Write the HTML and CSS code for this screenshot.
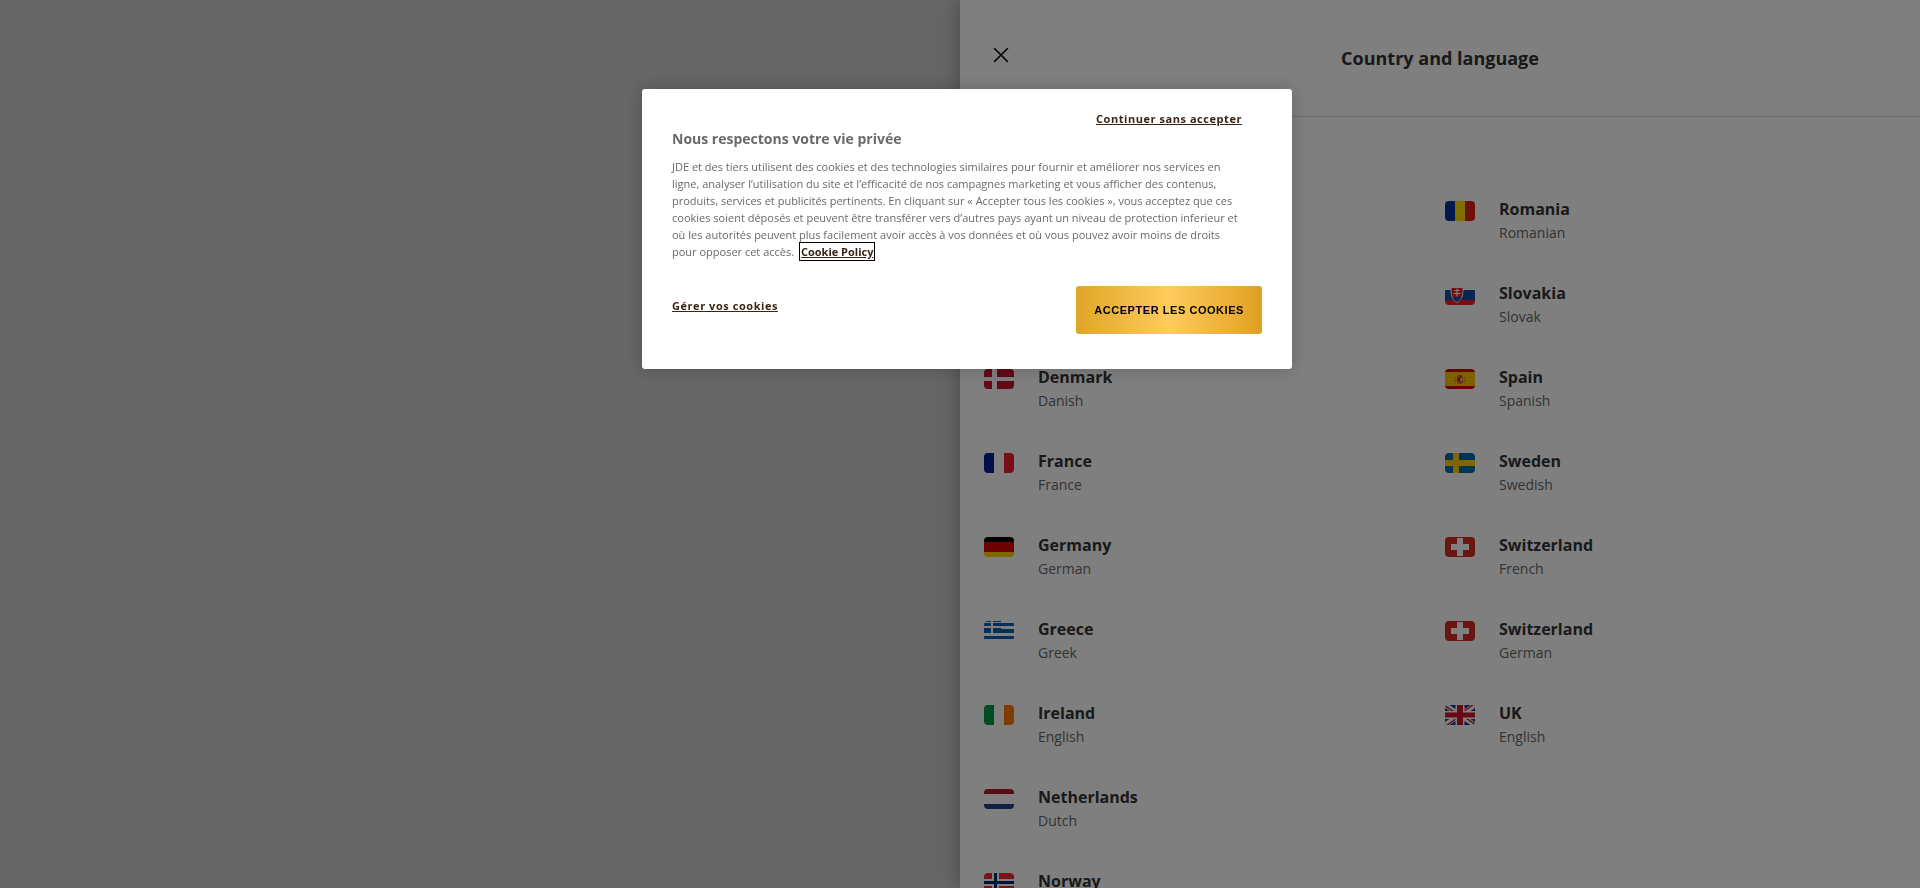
FILE: index.html
```html
<!DOCTYPE html>
<html lang="fr">
<head>
    <meta charset="UTF-8">
    <meta name="viewport" content="width=device-width, initial-scale=1.0">
    <title>Country and language</title>
    <link rel="stylesheet" href="styles.css">
</head>
<body>
    <aside class="panel">
        <header class="panel-header">
            <button type="button" class="close-btn" aria-label="Close">
                <svg width="16" height="16" viewBox="0 0 16 16"><path d="M1.500 1.500L14.500 14.500M14.500 1.500L1.500 14.500" stroke="#000" stroke-width="1.600" stroke-linecap="round"/></svg>
            </button>
            <h1 class="panel-title">Country and language</h1>
        </header>
        <nav class="countries">
            <div class="country-list from-third">
                <a href="#" class="country">
                    <svg class="flag" viewBox="0 0 30 20"><path fill="#c8102e" d="M0 0h30v20H0z"/><path fill="#fff" d="M8 0h5v20H8zM0 8h30v4H0z"/></svg>
                    <span class="country-text"><strong>Denmark</strong><span>Danish</span></span>
                </a>
                <a href="#" class="country">
                    <svg class="flag" viewBox="0 0 30 20"><path fill="#002395" d="M0 0h10v20H0z"/><path fill="#fff" d="M10 0h10v20H10z"/><path fill="#ed1b2e" d="M20 0h10v20H20z"/></svg>
                    <span class="country-text"><strong>France</strong><span>France</span></span>
                </a>
                <a href="#" class="country">
                    <svg class="flag" viewBox="0 0 30 20"><path d="M0 0h30v5H0z"/><path fill="#d00" d="M0 5h30v10H0z"/><path fill="#ffce00" d="M0 15h30v5H0z"/></svg>
                    <span class="country-text"><strong>Germany</strong><span>German</span></span>
                </a>
                <a href="#" class="country">
                    <svg class="flag" viewBox="0 0 30 20"><path fill="#fff" d="M0 0h30v20H0z"/><path fill="#0d5eaf" d="M0 0h7v1H0zM9 0h8v1H9zM0 2h7v10H0zM9 2h8v10H9zM17 2h13v3H17zM17 8h13v4H17zM0 15h30v3H0z"/><path fill="#fff" d="M0 5h17v2H0z"/></svg>
                    <span class="country-text"><strong>Greece</strong><span>Greek</span></span>
                </a>
                <a href="#" class="country">
                    <svg class="flag" viewBox="0 0 30 20"><path fill="#009a49" d="M0 0h10v20H0z"/><path fill="#fff" d="M10 0h10v20H10z"/><path fill="#ff7900" d="M20 0h10v20H20z"/></svg>
                    <span class="country-text"><strong>Ireland</strong><span>English</span></span>
                </a>
                <a href="#" class="country">
                    <svg class="flag" viewBox="0 0 30 20"><path fill="#ae1c28" d="M0 0h30v5H0z"/><path fill="#fff" d="M0 5h30v10H0z"/><path fill="#21468b" d="M0 15h30v5H0z"/></svg>
                    <span class="country-text"><strong>Netherlands</strong><span>Dutch</span></span>
                </a>
                <a href="#" class="country">
                    <svg class="flag" viewBox="0 0 30 20"><path fill="#ef2b2d" d="M0 0h30v20H0z"/><path fill="#fff" d="M8 0h7v20H8zM0 6h30v7H0z"/><path fill="#002868" d="M10 0h3v20h-3zM0 8h30v3H0z"/></svg>
                    <span class="country-text"><strong>Norway</strong></span>
                </a>
            </div>
            <div class="country-list">
                <a href="#" class="country">
                    <svg class="flag" viewBox="0 0 30 20"><path fill="#00319c" d="M0 0h10v20H0z"/><path fill="#ffde00" d="M10 0h10v20H10z"/><path fill="#de2110" d="M20 0h10v20H20z"/></svg>
                    <span class="country-text"><strong>Romania</strong><span>Romanian</span></span>
                </a>
                <a href="#" class="country">
                    <svg class="flag" viewBox="0 0 30 20"><path fill="#fff" d="M0 0h30v20H0z"/><path fill="#0b4ea2" d="M0 5h30v10H0z"/><path fill="#ee1c25" d="M0 15h30v5H0z"/><path fill="#ee1c25" stroke="#fff" d="M6 2.500h12c.3 7.500-.8 12.300-6 15-5.200-2.700-6.300-7.500-6-15z"/><path fill="#0b4ea2" d="M8 13c2-2 6-2 8 0-1 2-2 3-4 4-2-1-3-2-4-4z"/><path fill="none" stroke="#fff" stroke-width="1.200" d="M12 3.500v8M9.500 5.500h5M8.500 8.500h7"/></svg>
                    <span class="country-text"><strong>Slovakia</strong><span>Slovak</span></span>
                </a>
                <a href="#" class="country">
                    <svg class="flag" viewBox="0 0 30 20"><path fill="#c8000d" d="M0 0h30v20H0z"/><path fill="#ffc400" d="M0 3h30v14H0z"/><path fill="#c8654a" d="M12 7l2-1 3 1 1 2v5l-3 1-3-1z"/><path fill="#a91e22" d="M12.500 9H15v3h-2.500zM15 6h1.500v3H15z"/><path fill="#ead0b4" d="M15.500 9H17v3h-1.500z"/><path fill="none" stroke="#a8752a" stroke-dasharray="2 1" d="M10 8v6.500M20 8v6.500"/></svg>
                    <span class="country-text"><strong>Spain</strong><span>Spanish</span></span>
                </a>
                <a href="#" class="country">
                    <svg class="flag" viewBox="0 0 30 20"><path fill="#006aa7" d="M0 0h30v20H0z"/><path fill="#fecc00" d="M8 0h6v20H8zM0 7h30v6H0z"/></svg>
                    <span class="country-text"><strong>Sweden</strong><span>Swedish</span></span>
                </a>
                <a href="#" class="country">
                    <svg class="flag" viewBox="0 0 30 20"><path fill="#d52b1e" d="M0 0h30v20H0z"/><path fill="#fff" d="M12 1h6v6h6v6h-6v6h-6v-6H6V7h6z"/></svg>
                    <span class="country-text"><strong>Switzerland</strong><span>French</span></span>
                </a>
                <a href="#" class="country">
                    <svg class="flag" viewBox="0 0 30 20"><path fill="#d52b1e" d="M0 0h30v20H0z"/><path fill="#fff" d="M12 1h6v6h6v6h-6v6h-6v-6H6V7h6z"/></svg>
                    <span class="country-text"><strong>Switzerland</strong><span>German</span></span>
                </a>
                <a href="#" class="country">
                    <svg class="flag" viewBox="0 0 30 20"><path fill="#003f87" d="M0 0h30v20H0z"/><path stroke="#fff" stroke-width="5" d="M0 0l30 20M30 0L0 20"/><path stroke="#cf142b" stroke-width="1.500" d="M0 0.800l12 8M30 19.200l-12-8M28 0L17 7.500M2 20l11-7.500"/><path fill="#fff" d="M10.500 0h9v20h-9zM0 6h30v8H0z"/><path fill="#cf142b" d="M12 0h6v20h-6zM0 7.500h30v5H0z"/></svg>
                    <span class="country-text"><strong>UK</strong><span>English</span></span>
                </a>
            </div>
        </nav>
    </aside>

    <div class="overlay">
        <div class="cookie-box" role="dialog" aria-labelledby="cookieTitle">
            <button type="button" class="link-btn continue-btn">Continuer sans accepter</button>
            <h2 class="cookie-title" id="cookieTitle">Nous respectons votre vie privée</h2>
            <p class="cookie-text">JDE et des tiers utilisent des cookies et des technologies similaires pour fournir et améliorer nos services en ligne, analyser l’utilisation du site et l’efficacité de nos campagnes marketing et vous afficher des contenus, produits, services et publicités pertinents. En cliquant sur « Accepter tous les cookies », vous acceptez que ces cookies soient déposés et peuvent être transférer vers d’autres pays ayant un niveau de protection inferieur et où les autorités peuvent plus facilement avoir accès à vos données et où vous pouvez avoir moins de droits pour opposer cet accès. <a href="#" class="policy-link">Cookie Policy</a></p>
            <div class="cookie-actions">
                <button type="button" class="link-btn manage-btn">Gérer vos cookies</button>
                <button type="button" class="accept-btn">Accepter les cookies</button>
            </div>
        </div>
    </div>
</body>
</html>
```
FILE: styles.css
```css
* {
    box-sizing: border-box;
}
body {
    margin: 0;
    height: 100vh;
    overflow: hidden;
    background-color: #ccc;
    font-family: 'Open Sans', 'Noto Sans', sans-serif;
    color: #333;
}
button {
    border: none;
    background: none;
    padding: 0;
    font-family: inherit;
    cursor: pointer;
}
.panel {
    width: 50%;
    height: 100%;
    margin-left: auto;
    background-color: #fff;
    box-shadow: 0 0 20px rgba(0, 0, 0, 0.3);
    overflow: hidden;
}
.panel-header {
    position: relative;
    display: flex;
    align-items: center;
    justify-content: center;
    height: 117px;
    border-bottom: 1px solid #d8d8d8;
}
.close-btn {
    position: absolute;
    left: 24px;
    top: 38px;
    width: 34px;
    height: 34px;
    display: flex;
    align-items: center;
    justify-content: center;
}
.panel-title {
    margin: 0;
    font-size: 18px;
    font-weight: 700;
    line-height: 24px;
}
.countries {
    display: grid;
    grid-template-columns: 1fr 1fr;
    padding: 80px 14px 0 24px;
}
.country-list {
    display: flex;
    flex-direction: column;
}
/* first two rows stay empty */
.from-third {
    padding-top: 168px;
}
.country {
    display: flex;
    gap: 24px;
    height: 84px;
    color: #333;
    text-decoration: none;
}
.flag {
    width: 30px;
    height: 20px;
    margin-top: 4px;
    border-radius: 4px;
}
.country-text {
    display: flex;
    flex-direction: column;
    font-size: 14px;
    line-height: 24px;
    color: #666;
}
.country-text strong {
    font-size: 16px;
    font-weight: 700;
    color: #333;
}
.overlay {
    position: fixed;
    inset: 0;
    background-color: rgba(0, 0, 0, 0.5);
}
.cookie-box {
    position: absolute;
    top: 10%;
    left: calc(50% - 318px);
    width: 650px;
    padding: 22px 30px 35px;
    display: flex;
    flex-direction: column;
    background-color: #fff;
    border-radius: 3px;
    box-shadow: 0 0 18px rgba(0, 0, 0, 0.2);
    color: #696969;
}
.link-btn {
    color: #3c2415;
    font-size: 11px;
    font-weight: 700;
    line-height: 16px;
    letter-spacing: 0.05em;
    text-decoration: underline;
}
.continue-btn {
    align-self: flex-end;
    margin-right: 20px;
}
.cookie-title {
    margin: 0 0 7px;
    font-size: 14px;
    line-height: 24px;
}
.cookie-text {
    max-width: 570px;
    margin: 0 0 26px;
    font-size: 11px;
    line-height: 17px;
}
.policy-link {
    margin-left: 4px;
    color: #3c2415;
    font-weight: 700;
    outline: 1px solid #000;
    outline-offset: 1px;
}
.cookie-actions {
    display: flex;
    justify-content: space-between;
    align-items: flex-start;
}
.manage-btn {
    margin-top: 12px;
}
.accept-btn {
    height: 48px;
    padding: 0 18px;
    border-radius: 3px;
    background: linear-gradient(90deg, #dfa527, #ffcb5c 50%, #dfa020);
    color: #000;
    font-family: 'Liberation Sans', Arial, sans-serif;
    font-size: 11px;
    font-weight: 700;
    letter-spacing: 0.05em;
    text-transform: uppercase;
}
```
